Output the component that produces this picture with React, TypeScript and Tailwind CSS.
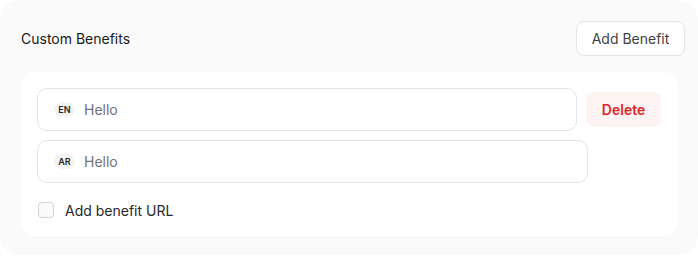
import React, { useState } from 'react';

function LangInput({ lang, value, width }: { lang: string; value: string; width: string }) {
  return (
    <div className={`flex h-[43px] items-center gap-[9px] rounded-[10px] border border-[#e4e4e7] bg-white pl-4 ${width}`}>
      <span className="flex h-[15px] w-[21px] items-center justify-center rounded-full bg-[#f4f4f5] text-[9px] font-semibold text-[#27272a]">
        {lang}
      </span>
      <span className="text-[14px] text-[#71717a]">{value}</span>
    </div>
  );
}

export default function App() {
  const [withUrl, setWithUrl] = useState(false);

  return (
    <div className="h-[256px] w-[698px] bg-white" style={{ fontFamily: 'Inter, "Noto Sans", sans-serif' }}>
      <div className="h-[255px] rounded-[20px] bg-[#fafafa] px-5 pt-[21px] pb-5">
        <div className="mr-[-7px] flex items-center justify-between pl-px">
          <h3 className="text-[14px] font-normal text-[#18181b]">Custom Benefits</h3>
          <button className="h-[35px] w-[109px] rounded-[8px] border border-[#e4e4e7] bg-white text-[14px] text-[#3f3f46]">
            Add Benefit
          </button>
        </div>

        <div className="mt-4 ml-px rounded-[14px] bg-white pt-4 pr-[17px] pb-4 pl-4">
          <div className="flex items-center gap-[9px]">
            <LangInput lang="EN" value="Hello" width="w-[541px]" />
            <button className="h-[35px] w-[75px] rounded-[8px] bg-[#fdf3f3] text-[14px] font-semibold text-[#dc2626]">
              Delete
            </button>
          </div>

          <div className="mt-[9px]">
            <LangInput lang="AR" value="Hello" width="w-[551px]" />
          </div>

          <label className="mt-[17px] flex h-[20px] items-center gap-[11px] pl-[1px]">
            <input
              type="checkbox"
              checked={withUrl}
              onChange={(e) => setWithUrl(e.target.checked)}
              className="h-4 w-4 appearance-none rounded-[4px] border border-[#d4d4d8] bg-[#fafafa]"
            />
            <span className="text-[14px] text-[#27272a]">Add benefit URL</span>
          </label>
        </div>
      </div>
    </div>
  );
}
